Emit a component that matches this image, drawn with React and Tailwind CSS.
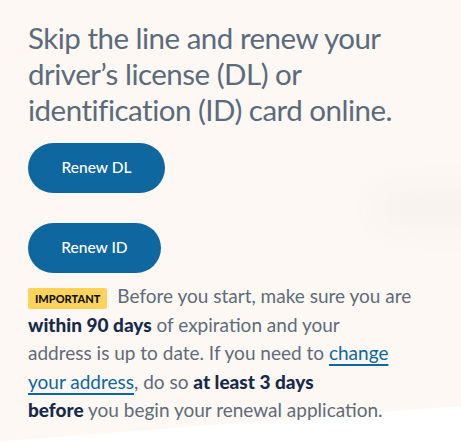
export default function App() {
  return (
    <div className="relative h-[443px] w-[461px] overflow-hidden bg-[#fdf8f3] font-['Lato',sans-serif]">
      <div className="pointer-events-none absolute left-[375px] top-[188px] h-[40px] w-[150px] rounded-full bg-[#f7f2ed] blur-[14px]" />
      <div className="pointer-events-none absolute bottom-0 left-0 h-[45px] w-full bg-white [clip-path:polygon(0_96%,100%_18%,100%_100%,0_100%)]" />
      <div className="relative pl-[28px] pr-[30px] pt-[20px]">
        <h1 className="text-[29.5px] leading-[36px] font-normal tracking-[-0.5px] text-[#5b6b7c]">
          Skip the line and renew your
          <br />
          driver’s license (DL) or
          <br />
          identification (ID) card online.
        </h1>
        <div className="mt-[15px] flex flex-col items-start gap-[30px]">
          <button className="h-[50px] w-[137px] rounded-full bg-[#0e679e] text-[15.5px] font-medium text-white">
            Renew DL
          </button>
          <button className="h-[50px] w-[133px] rounded-full bg-[#0e679e] text-[15.5px] font-medium text-white">
            Renew ID
          </button>
        </div>
        <p className="mt-[9px] whitespace-nowrap text-[19px] leading-[28.5px] text-[#5e6b7a]">
          <span className="mr-[10px] inline-block h-[21px] rounded-[2px] bg-[#fdd35c] px-[7px] align-baseline text-[11px] leading-[21px] font-black text-[#111]">
            IMPORTANT
          </span>
          Before you start, make sure you are
          <br />
          <strong className="font-black text-[#17294a]">within 90 days</strong> of expiration and your
          <br />
          address is up to date. If you need to{" "}
          <a href="#" className="text-[#0e679e] underline decoration-[2px] underline-offset-[4px]">change
            <br />
            your address</a>, do so <strong className="font-black text-[#17294a]">at least 3 days</strong>
          <br />
          <strong className="font-black text-[#17294a]">before</strong> you begin your renewal application.
        </p>
      </div>
    </div>
  );
}
